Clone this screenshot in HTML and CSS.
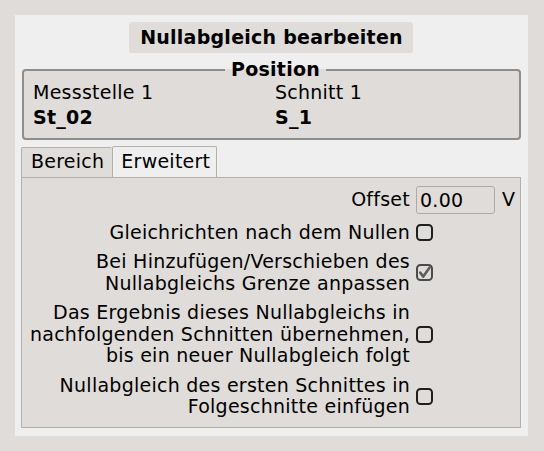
FILE: index.html
```html
<!DOCTYPE html>
<html lang="de">
<head>
<meta charset="utf-8">
<title>Nullabgleich bearbeiten</title>
<link rel="stylesheet" href="styles.css">
</head>
<body>
<div class="panel">
  <div class="title">Nullabgleich bearbeiten</div>
  <fieldset class="group">
    <legend>Position</legend>
    <div class="pos-grid">
      <div>Messstelle 1</div>
      <div>Schnitt 1</div>
      <div class="bold">St_02</div>
      <div class="bold">S_1</div>
    </div>
  </fieldset>
  <div class="tabs">
    <div class="tab">Bereich</div>
    <div class="tab active">Erweitert</div>
  </div>
  <div class="pane">
    <div class="lbl">Offset</div>
    <div class="ctl input">0.00</div>
    <div class="unit">V</div>

    <div class="lbl">Gleichrichten nach dem Nullen</div>
    <div class="ctl cb"><svg width="17" height="17" viewBox="0 0 17 17"><rect x="1" y="1" width="15" height="15" rx="3.5" fill="none" stroke="#1f1f1f" stroke-width="2"/></svg></div>

    <div class="lbl">Bei Hinzufügen/Verschieben des<br>Nullabgleichs Grenze anpassen</div>
    <div class="ctl cb"><svg width="17" height="17" viewBox="0 0 17 17"><rect x="1" y="1" width="15" height="15" rx="3.5" fill="none" stroke="#4a4a4a" stroke-width="2"/><path d="M4.2 8.6 L7.3 12.6 L13.6 3.6" fill="none" stroke="#5e5e5e" stroke-width="2.6" stroke-linecap="round" stroke-linejoin="round"/></svg></div>

    <div class="lbl">Das Ergebnis dieses Nullabgleichs in<br>nachfolgenden Schnitten übernehmen,<br>bis ein neuer Nullabgleich folgt</div>
    <div class="ctl cb"><svg width="17" height="17" viewBox="0 0 17 17"><rect x="1" y="1" width="15" height="15" rx="3.5" fill="none" stroke="#1f1f1f" stroke-width="2"/></svg></div>

    <div class="lbl">Nullabgleich des ersten Schnittes in<br>Folgeschnitte einfügen</div>
    <div class="ctl cb"><svg width="17" height="17" viewBox="0 0 17 17"><rect x="1" y="1" width="15" height="15" rx="3.5" fill="none" stroke="#1f1f1f" stroke-width="2"/></svg></div>
  </div>
</div>
</body>
</html>
```

FILE: styles.css
```css
html, body {
  margin: 0;
  padding: 0;
}
body {
  background: #dfdcd9;
  font-family: "DejaVu Sans", "Noto Sans", sans-serif;
  font-size: 19px;
  line-height: 21.5px;
  letter-spacing: 0.25px;
  color: #000;
}
.panel {
  margin: 15px;
  width: 513px;
  box-sizing: border-box;
  padding: 7px 7px 8px 6px;
  background: #efefef;
  display: flex;
  flex-direction: column;
}
.title {
  align-self: center;
  font-weight: bold;
  background: #dfdcd9;
  border-radius: 3px;
  padding: 4.75px 10px 4.75px 11px;
}
.group {
  margin: 6px 0 0 1px;
  padding: 1px 9px 9.5px 9px;
  border: 2px solid #8f8d8b;
  border-radius: 4px;
  background: #dfdcd9;
  min-width: 0;
}
.group legend {
  margin-left: 192px;
  padding: 0 6px;
  font-weight: bold;
}
.pos-grid {
  display: grid;
  grid-template-columns: 1fr 1fr;
  column-gap: 7px;
  row-gap: 3.5px;
}
.bold {
  font-weight: bold;
}
.tabs {
  margin-top: 6px;
  display: flex;
  align-items: flex-end;
}
.tab {
  border: 1px solid #b4b0ac;
  border-bottom: 0;
  border-radius: 2px 2px 0 0;
  background: #dfdcd9;
  padding: 3.75px 8px 3.75px 9px;
  border-right: 0;
}
.tab.active {
  background: #efefef;
  border-right: 1px solid #b4b0ac;
  padding: 4.75px 6px 3.75px 8px;
}
.pane {
  border: 1px solid #b4b0ac;
  background: #dfdcd9;
  padding: 8px 8px 9px 7px;
  display: grid;
  grid-template-columns: 1fr 80px 10px;
  column-gap: 6px;
  row-gap: 8px;
  align-items: center;
}
.lbl {
  grid-column: 1;
  text-align: right;
  white-space: nowrap;
}
.ctl {
  grid-column: 2;
}
.unit {
  grid-column: 3;
}
.input {
  box-sizing: border-box;
  width: 79px;
  height: 28px;
  border: 1px solid #aeaaa6;
  border-radius: 3px;
  padding: 0 3px;
  line-height: 26px;
  background: #dfdcd9;
}
.cb {
  width: 17px;
  height: 17px;
  justify-self: start;
}
.cb svg {
  display: block;
}
```
